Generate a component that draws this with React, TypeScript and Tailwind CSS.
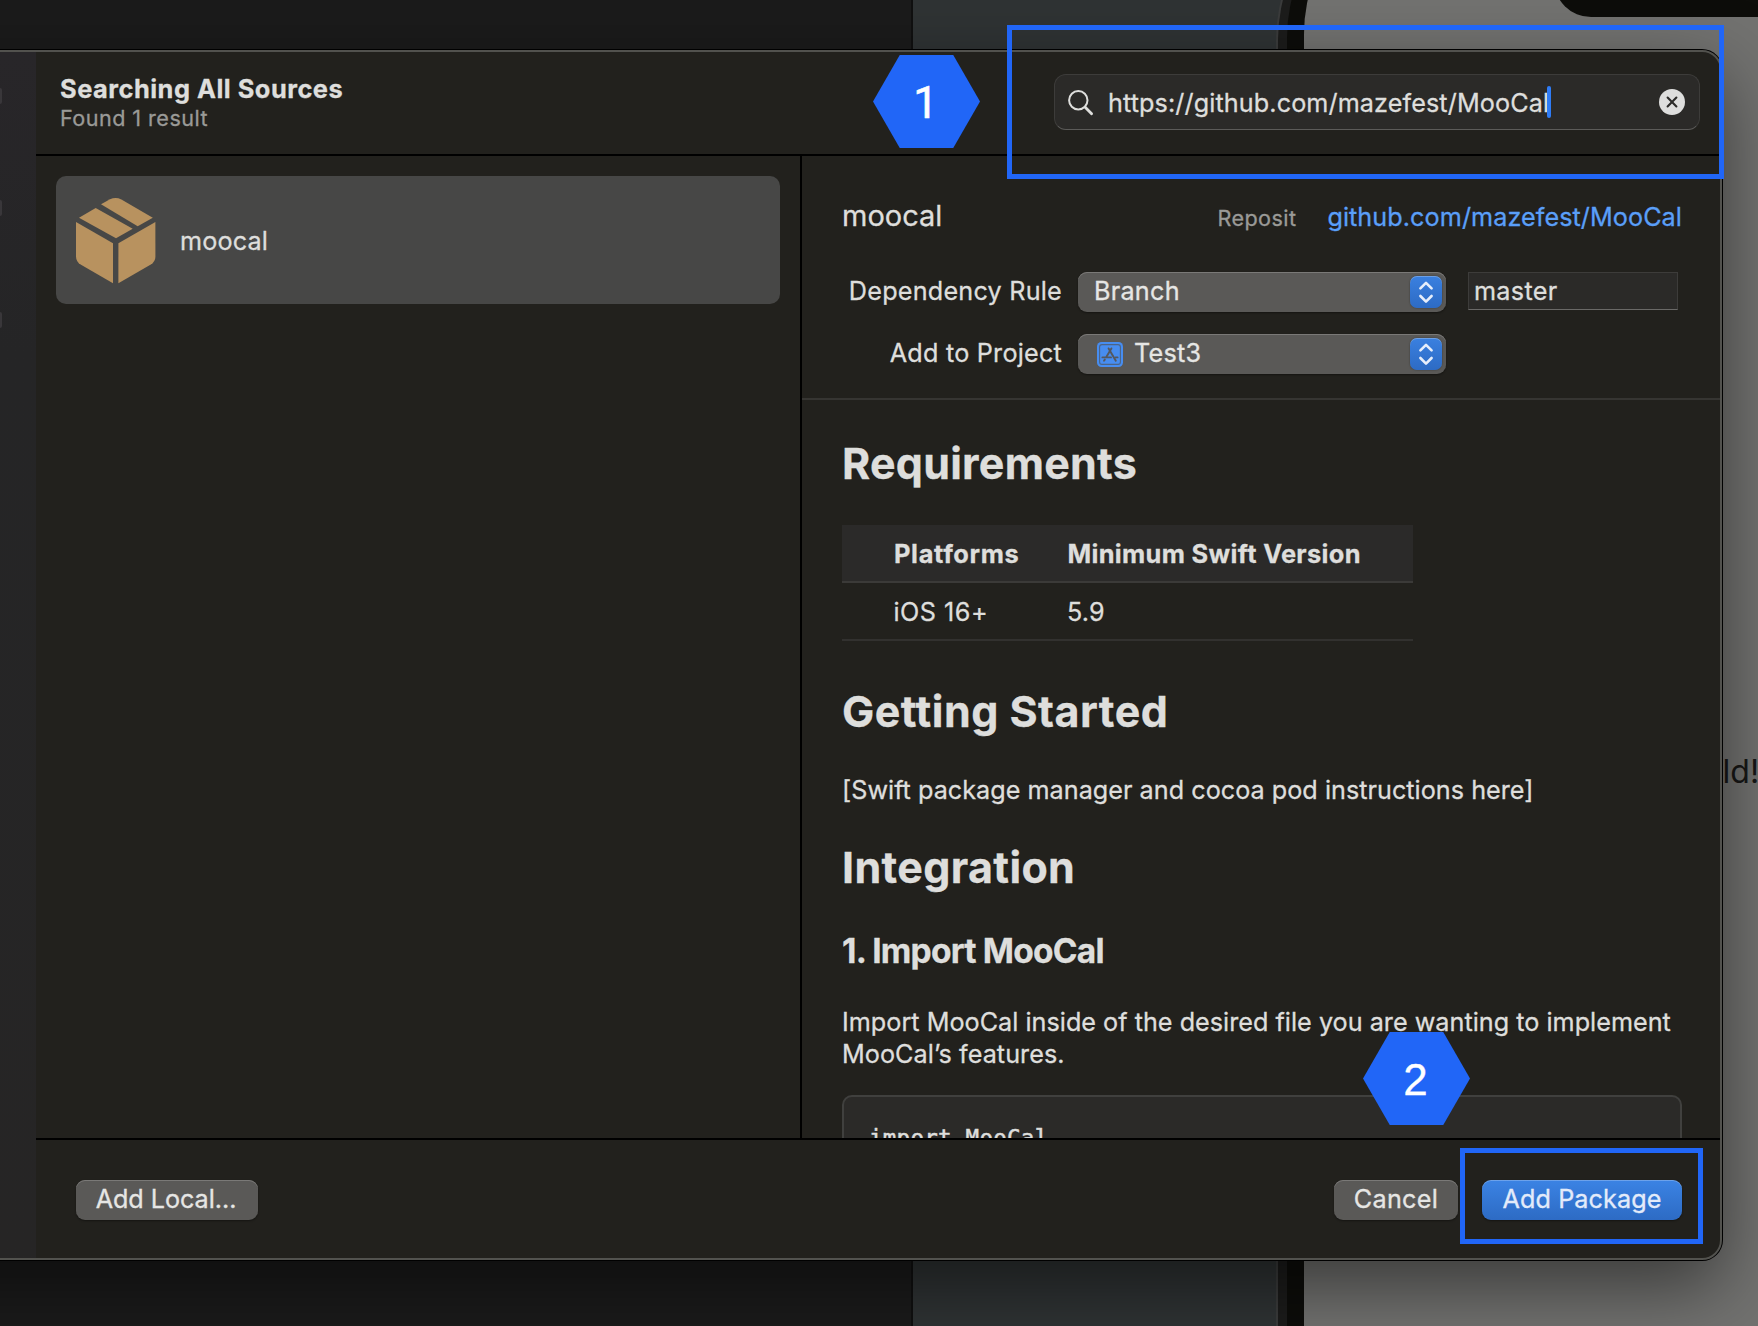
import type { ReactNode } from "react";

function PackageIcon() {
  return (
    <svg width="80" height="86" viewBox="0 0 80 86" fill="#b8925f" className="mt-px shrink-0">
      <path d="M25 6.3 34 1.3Q39.7-1.3 45.4 1.5L76.8 19.7 61.7 28.2Z" />
      <path d="M3 19.7 19.7 10 56.7 30.7 40 40.2Z" />
      <path d="M0 24 37 45.3V85.3L5 66.8Q0 63.8 0 58.8Z" />
      <path d="M42.4 45.3 79.4 24V58.8Q79.4 63.8 74.4 66.8L42.4 85.3Z" />
    </svg>
  );
}

function SearchIcon() {
  return (
    <svg width="26" height="27" viewBox="0 0 26 27" fill="none" stroke="#dededc" strokeLinecap="round" className="shrink-0">
      <circle cx="10.3" cy="11.2" r="9.2" strokeWidth="2" />
      <path d="M17.2 18.2 23.6 24.7" strokeWidth="2.8" />
    </svg>
  );
}

function ClearIcon() {
  return (
    <svg width="26" height="26" viewBox="0 0 26 26" className="shrink-0">
      <circle cx="13" cy="13" r="13" fill="#dededd" />
      <path d="M8.6 8.6 17.4 17.4M17.4 8.6 8.6 17.4" stroke="#2c2b29" strokeWidth="2.1" strokeLinecap="round" />
    </svg>
  );
}

function AppIcon() {
  return (
    <svg width="26" height="25" viewBox="0 0 26 25" className="shrink-0">
      <rect width="26" height="25" rx="4.5" fill="#478df0" />
      <rect x="2.6" y="2.6" width="20.8" height="19.8" rx="2.4" fill="none" stroke="#4c6486" strokeWidth="1.1" />
      <g stroke="#54585f" strokeWidth="1.9" strokeLinecap="round" fill="none">
        <path d="M14.4 6.4 9.6 14.6M7.8 17.6 7 18.8" />
        <path d="M11.6 6.4 18.8 18.8" />
        <path d="M5.4 15.4H14M18.6 15.4H20.6" />
      </g>
    </svg>
  );
}

function Stepper() {
  return (
    <span className="mt-1 mr-1 flex h-8 w-8 items-center justify-center rounded-[7px] bg-linear-to-b from-[#3a80e0] to-[#2d6bc4] shadow-[inset_0_1px_0_rgba(255,255,255,0.25),0_0_2px_rgba(0,0,0,0.4)]">
      <svg width="16" height="24" viewBox="0 0 16 24" fill="none" stroke="#e6eefb" strokeWidth="2.6" strokeLinecap="round" strokeLinejoin="round">
        <path d="M2.4 8.4 8 2.8 13.6 8.4M2.4 16 8 21.6 13.6 16" />
      </svg>
    </span>
  );
}

function Popup({ children }: { children: ReactNode }) {
  return (
    <div className="flex h-10 w-[368px] items-start justify-between rounded-[9px] bg-[#5a5957] pl-4 text-[#e6e6e4] shadow-[inset_0_1px_0_#7a7977,0_1px_2px_rgba(0,0,0,0.4)]">
      {children}
      <Stepper />
    </div>
  );
}

function Hexagon({ children, className }: { children: ReactNode; className: string }) {
  return (
    <div className={`absolute flex h-[93px] w-[107px] items-center justify-center bg-[#2166f7] text-[44px] leading-none text-white [clip-path:polygon(25%_0,75%_0,100%_50%,75%_100%,25%_100%,0_50%)] ${className}`}>
      {children}
    </div>
  );
}

function Backdrop() {
  return (
    <div className="flex h-full">
      <div className="w-[913px] shrink-0 border-r-2 border-[#101010] bg-[#1b1b1b]" />
      <div className="flex-1 overflow-hidden bg-[#2f3334]">
        <div className="-mt-[122px] ml-[363px] h-[1600px] w-[1000px] rounded-tl-[162px] border-l-2 border-[#3b3c3c] bg-[#1c1c1b] pl-[9px]">
          <div className="h-full rounded-tl-[160px] bg-[#0d0d0a] pl-[17px]">
            <div className="h-full rounded-tl-[156px] bg-[#727270] pt-[65px] pl-[250px]">
              <div className="h-[74px] w-[400px] rounded-full bg-[#0d0d0a]" />
              <div className="mt-[735px] ml-[156px] text-[32px] leading-[40px] text-[#171716]">rld!</div>
            </div>
          </div>
        </div>
      </div>
    </div>
  );
}

function Header() {
  return (
    <header className="flex h-[104px] items-start justify-between border-b-2 border-black pt-[22px] pr-5 pl-6">
      <div>
        <h1 className="text-[25.4px] leading-[29px] font-bold tracking-[0.5px]">Searching All Sources</h1>
        <p className="mt-px text-[21.6px] leading-[28px] tracking-[0.45px] text-[#9a9a97]">Found 1 result</p>
      </div>
      <div className="flex h-14 w-[646px] items-center rounded-[12px] border border-[#3d3c3a] border-b-[#5c5b59] bg-[#2b2a28] pr-[14px] pl-[13px]">
        <SearchIcon />
        <span className="ml-[14px] pt-px leading-8 tracking-[0.1px]">https://github.com/mazefest/MooCal</span>
        <span className="-ml-[2px] h-8 w-1 rounded-full bg-[#2f7cf6]" />
        <span className="ml-auto">
          <ClearIcon />
        </span>
      </div>
    </header>
  );
}

function PackageOptions() {
  return (
    <section className="h-[244px] border-b-2 border-[#363532] pt-10 pr-[38px] pl-10">
      <div className="flex h-10 items-baseline leading-10">
        <h2 className="text-[29px]">moocal</h2>
        <span className="mr-[31px] ml-auto text-[21.6px] tracking-[0.4px] text-[#9a9a97]">Reposit</span>
        <a className="tracking-[0.07px] text-[#5a9ff8]">github.com/mazefest/MooCal</a>
      </div>
      <div className="mt-9 grid grid-cols-[220px_368px_210px] gap-y-[22px] leading-[38px]">
        <span className="text-right tracking-[0.22px]">Dependency Rule</span>
        <div className="ml-4">
          <Popup>
            <span className="tracking-[0.25px]">Branch</span>
          </Popup>
        </div>
        <div className="ml-[38px] h-[38px] w-[210px] border border-[#3d3c3a] border-b-[#6a6967] bg-[#2b2a28] pl-[5px] leading-[36px] tracking-[0.3px]">
          master
        </div>
        <span className="text-right tracking-[0.22px]">Add to Project</span>
        <div className="ml-4">
          <Popup>
            <span className="ml-[3px] flex">
              <span className="mt-2">
                <AppIcon />
              </span>
              <span className="ml-[11px] tracking-[0.25px]">Test3</span>
            </span>
          </Popup>
        </div>
      </div>
    </section>
  );
}

function Readme() {
  return (
    <article className="h-[738px] overflow-hidden pt-[38px] pr-[38px] pl-10">
      <h2 className="text-[43px] leading-[50px] font-bold tracking-[0.25px]">Requirements</h2>
      <div className="mt-[37px] w-[571px]">
        <div className="flex h-[58px] items-center border-b-2 border-[#3b3a38] bg-[#2b2a29] pt-[3px] pl-[52px] text-[25.4px] font-bold">
          <span className="w-[173.5px] tracking-[0.65px]">Platforms</span>
          <span className="tracking-[0.34px]">Minimum Swift Version</span>
        </div>
        <div className="flex h-[58px] items-center border-b-2 border-[#32312f] pt-[3px] pl-[51.5px]">
          <span className="w-[173.5px] tracking-[0.5px]">iOS 16+</span>
          <span className="tracking-[0.1px]">5.9</span>
        </div>
      </div>
      <h2 className="mt-[45px] text-[43px] leading-[50px] font-bold tracking-[0.48px]">Getting Started</h2>
      <p className="mt-[38px] leading-8 tracking-[0.02px]">[Swift package manager and cocoa pod instructions here]</p>
      <h2 className="mt-9 text-[43px] leading-[50px] font-bold tracking-[0.35px]">Integration</h2>
      <h3 className="mt-[39px] text-[33.5px] leading-10 font-bold tracking-[-0.78px]">1. Import MooCal</h3>
      <p className="mt-[34.5px] leading-8 whitespace-nowrap">
        <span className="tracking-[0.015px]">Import MooCal inside of the desired file you are wanting to implement</span>
        <br />
        <span className="tracking-[0.05px]">MooCal’s features.</span>
      </p>
      <pre className="mt-[25.5px] h-24 rounded-[10px] border-2 border-[#40403e] bg-[#2b2a28] pt-[25px] pl-[25px] font-['DejaVu_Sans_Mono',monospace] text-[22.6px] leading-8 tracking-[0.2px] [-webkit-text-stroke:0.5px]">
        import MooCal
      </pre>
    </article>
  );
}

function Footer() {
  const button = "flex h-10 items-start justify-center rounded-[9px] leading-[38px]";
  const grey = "bg-[#5a5957] text-[#e6e6e4] shadow-[inset_0_1px_0_#7a7977,0_1px_2px_rgba(0,0,0,0.4)]";
  return (
    <footer className="flex h-[120px] items-start border-t-2 border-black pt-10 pr-[38px] pl-10">
      <button className={`${button} ${grey} w-[182px] pr-0.5 tracking-[-0.05px]`}>Add Local...</button>
      <button className={`${button} ${grey} mr-6 ml-auto w-[124px] tracking-[0.3px]`}>Cancel</button>
      <button
        className={`${button} w-[200px] bg-linear-to-b from-[#3b83e4] to-[#2d6bc4] tracking-[0.08px] text-[#e3ebfa] shadow-[inset_0_1px_0_rgba(255,255,255,0.25),0_1px_2px_rgba(0,0,0,0.4)]`}
      >
        Add Package
      </button>
    </footer>
  );
}

export default function App() {
  return (
    <div className="relative h-[1326px] w-[1758px] overflow-hidden bg-[#1b1b1b] font-[Inter,sans-serif]">
      <Backdrop />

      <div className="absolute top-[50px] -left-[100px] flex h-[1210px] w-[1822px] overflow-hidden rounded-[20px] border-2 border-[#52524e] bg-[#22211d] pl-[98px] text-[25.2px] text-[#dededc] shadow-[0_0_0_1px_#000,0_26px_72px_rgba(0,0,0,0.5)] [-webkit-text-stroke:0.3px]">
        <aside className="flex w-9 shrink-0 flex-col gap-[96px] bg-linear-to-b from-[#282629] via-[#252526] via-25% to-[#262525] pt-9">
          <span className="h-4 w-0.5 rounded-r-full bg-[#39373a]" />
          <span className="h-4 w-0.5 rounded-r-full bg-[#39373a]" />
          <span className="h-4 w-0.5 rounded-r-full bg-[#39373a]" />
        </aside>
        <main className="min-w-0 flex-1">
          <Header />
          <div className="flex h-[982px]">
            <div className="w-[766px] shrink-0 border-r-2 border-black p-5">
              <div className="flex h-32 items-center rounded-[10px] bg-[#474746] pl-5">
                <PackageIcon />
                <span className="ml-6 pt-[3px] tracking-[0.15px]">moocal</span>
              </div>
            </div>
            <div className="min-w-0 flex-1">
              <PackageOptions />
              <Readme />
            </div>
          </div>
          <Footer />
        </main>
      </div>

      <div className="absolute top-[25px] left-[1007px] h-[154px] w-[717px] border-[5px] border-[#2166f7]" />
      <div className="absolute top-[1148px] left-[1460px] h-24 w-[243px] border-[5px] border-[#2166f7]" />
      <Hexagon className="top-[55px] left-[873px] pt-0.5 pr-0.5 font-[Roboto,sans-serif] [-webkit-text-stroke:0.6px]">1</Hexagon>
      <Hexagon className="top-[1032px] left-[1363px] pt-0.5 pr-0.5 font-['Liberation_Sans',Arial,sans-serif] [-webkit-text-stroke:0.3px]">2</Hexagon>
    </div>
  );
}
